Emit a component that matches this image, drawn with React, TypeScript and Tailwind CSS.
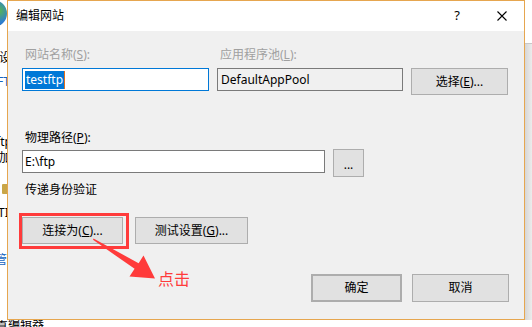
import React from 'react';

const btn =
  'flex items-center justify-center bg-[#e1e1e1] border border-[#adadad] text-[12px] text-black';

function Label({ children, disabled }: { children: React.ReactNode; disabled?: boolean }) {
  return (
    <div className={`h-4 leading-4 pl-[3px] text-[12px] ${disabled ? 'text-[#a0a0a0]' : 'text-black'}`}>
      {children}
    </div>
  );
}

function BackgroundLeft() {
  return (
    <div className="w-[7px] h-[320px] bg-white overflow-hidden flex flex-col text-[12px] leading-4 whitespace-nowrap">
      <div className="w-[28px] h-[27px] -ml-[21px] rounded-full bg-[radial-gradient(circle_at_70%_40%,#58b84a_0%,#2f7fd0_45%,#1c4f9c_100%)]" />
      <div className="mt-[23px] -ml-[1px] text-black">设置</div>
      <div className="mt-[8px] -ml-[3px] text-[#1565c0]">FTP</div>
      <div className="mt-[44px] -ml-[4px] text-black">ftp</div>
      <div className="-ml-[1px] text-black">加</div>
      <div className="mt-[18px] ml-[2px] w-[6px] h-[10px] bg-[#c9a648] rounded-[1px]" />
      <div className="mt-[11px] -ml-[2px] text-black">TI</div>
      <div className="mt-[31px] -ml-[5px] text-[#1565c0]">管理</div>
    </div>
  );
}

function BackgroundRight() {
  return (
    <div className="w-[7px] h-[320px] flex flex-col">
      <div className="h-[43px] bg-white" />
      <div className="h-px bg-[#c8c8c8]" />
      <div className="flex-1 bg-[linear-gradient(to_right,#d6d6d6,#ececec)]" />
    </div>
  );
}

export default function App() {
  return (
    <div className="relative w-[532px] h-[327px] overflow-hidden bg-white font-['Noto_Sans','Noto_Sans_CJK_SC',sans-serif]">
      <div className="flex">
        <BackgroundLeft />

        <div className="w-[518px] h-[320px] border border-[#e6a64f] bg-[#f0f0f0] flex flex-col">
          {/* title bar */}
          <div className="h-[30px] bg-white flex items-center pl-[8px] text-[12px] text-black">
            <span>编辑网站</span>
            <span className="ml-auto mr-[37px] text-[13px]">?</span>
            <svg width="10" height="10" viewBox="0 0 10 10" className="mr-[17px]">
              <path d="M0.5 0.5 L9.5 9.5 M9.5 0.5 L0.5 9.5" stroke="#000" strokeWidth="1.1" />
            </svg>
          </div>

          {/* body */}
          <div className="flex-1 pl-[14px] pt-[16px] text-[12px]">
            <div className="flex items-start gap-[8px]">
              <div className="w-[187px]">
                <Label disabled>
                  网站名称(<u>S</u>):
                </Label>
                <div className="mt-[5px] h-[23px] border border-[#0078d7] bg-white flex items-center pl-[2px]">
                  <span className="bg-[#0078d7] text-white leading-[18px] px-px">testftp</span>
                  <span className="w-px h-[18px] bg-[#e0701e]" />
                </div>
              </div>
              <div className="w-[186px]">
                <Label disabled>
                  应用程序池(<u>L</u>):
                </Label>
                <div className="mt-[5px] h-[23px] border border-[#7a7a7a] bg-[#f0f0f0] flex items-center pl-[3px] text-black">
                  DefaultAppPool
                </div>
              </div>
              <button className={`${btn} mt-[21px] w-[97px] h-[27px]`}>
                选择(<u>E</u>)...
              </button>
            </div>

            <div className="mt-[35px]">
              <Label>
                物理路径(<u>P</u>):
              </Label>
              <div className="mt-[4px] flex items-start gap-[8px]">
                <div className="w-[303px] h-[23px] border border-[#7a7a7a] bg-white flex items-center pl-[2px] text-black">
                  E:\ftp
                </div>
                <button className={`${btn} -mt-px w-[31px] h-[28px] pt-[3px]`}>...</button>
              </div>
            </div>

            <div className="mt-[5px] h-4 leading-4 pl-[3px] text-black">传递身份验证</div>

            <div className="mt-[15px] -ml-[3px] flex items-start gap-[6px]">
              <div className="border-[3px] border-[#ff3b3b] pt-px pb-[2px] pr-[3px]">
                <button className={`${btn} w-[101px] h-[27px]`}>
                  连接为(<u>C</u>)...
                </button>
              </div>
              <button className={`${btn} mt-[4px] w-[113px] h-[27px]`}>
                测试设置(<u>G</u>)...
              </button>
            </div>

            <div className="mt-[25px] flex justify-end gap-[10px] pr-[15px]">
              <button className={`${btn} w-[91px] h-[28px] border-2 border-[#0078d7]`}>确定</button>
              <button className={`${btn} w-[97px] h-[28px]`}>取消</button>
            </div>
          </div>
        </div>

        <BackgroundRight />
      </div>

      {/* background window text below the dialog */}
      <div className="h-[7px] overflow-hidden bg-white">
        <div className="-mt-[3px] -ml-[4px] text-[12px] leading-[14px] text-black whitespace-nowrap">
          置编辑器
        </div>
      </div>

      {/* annotation: arrow and label */}
      <svg className="absolute inset-0 pointer-events-none" width="532" height="327" viewBox="0 0 532 327">
        <path
          d="M93.5 238.5 L138.6 263.2 L143.5 255.5 L155 278.5 L129.5 276.5 L134.6 268.8 L93 239.8 Z"
          fill="#ff3b3b"
        />
      </svg>
      <div className="absolute left-[158px] top-[270px] text-[16px] leading-[18px] text-[#ff3b3b]">点击</div>
    </div>
  );
}
